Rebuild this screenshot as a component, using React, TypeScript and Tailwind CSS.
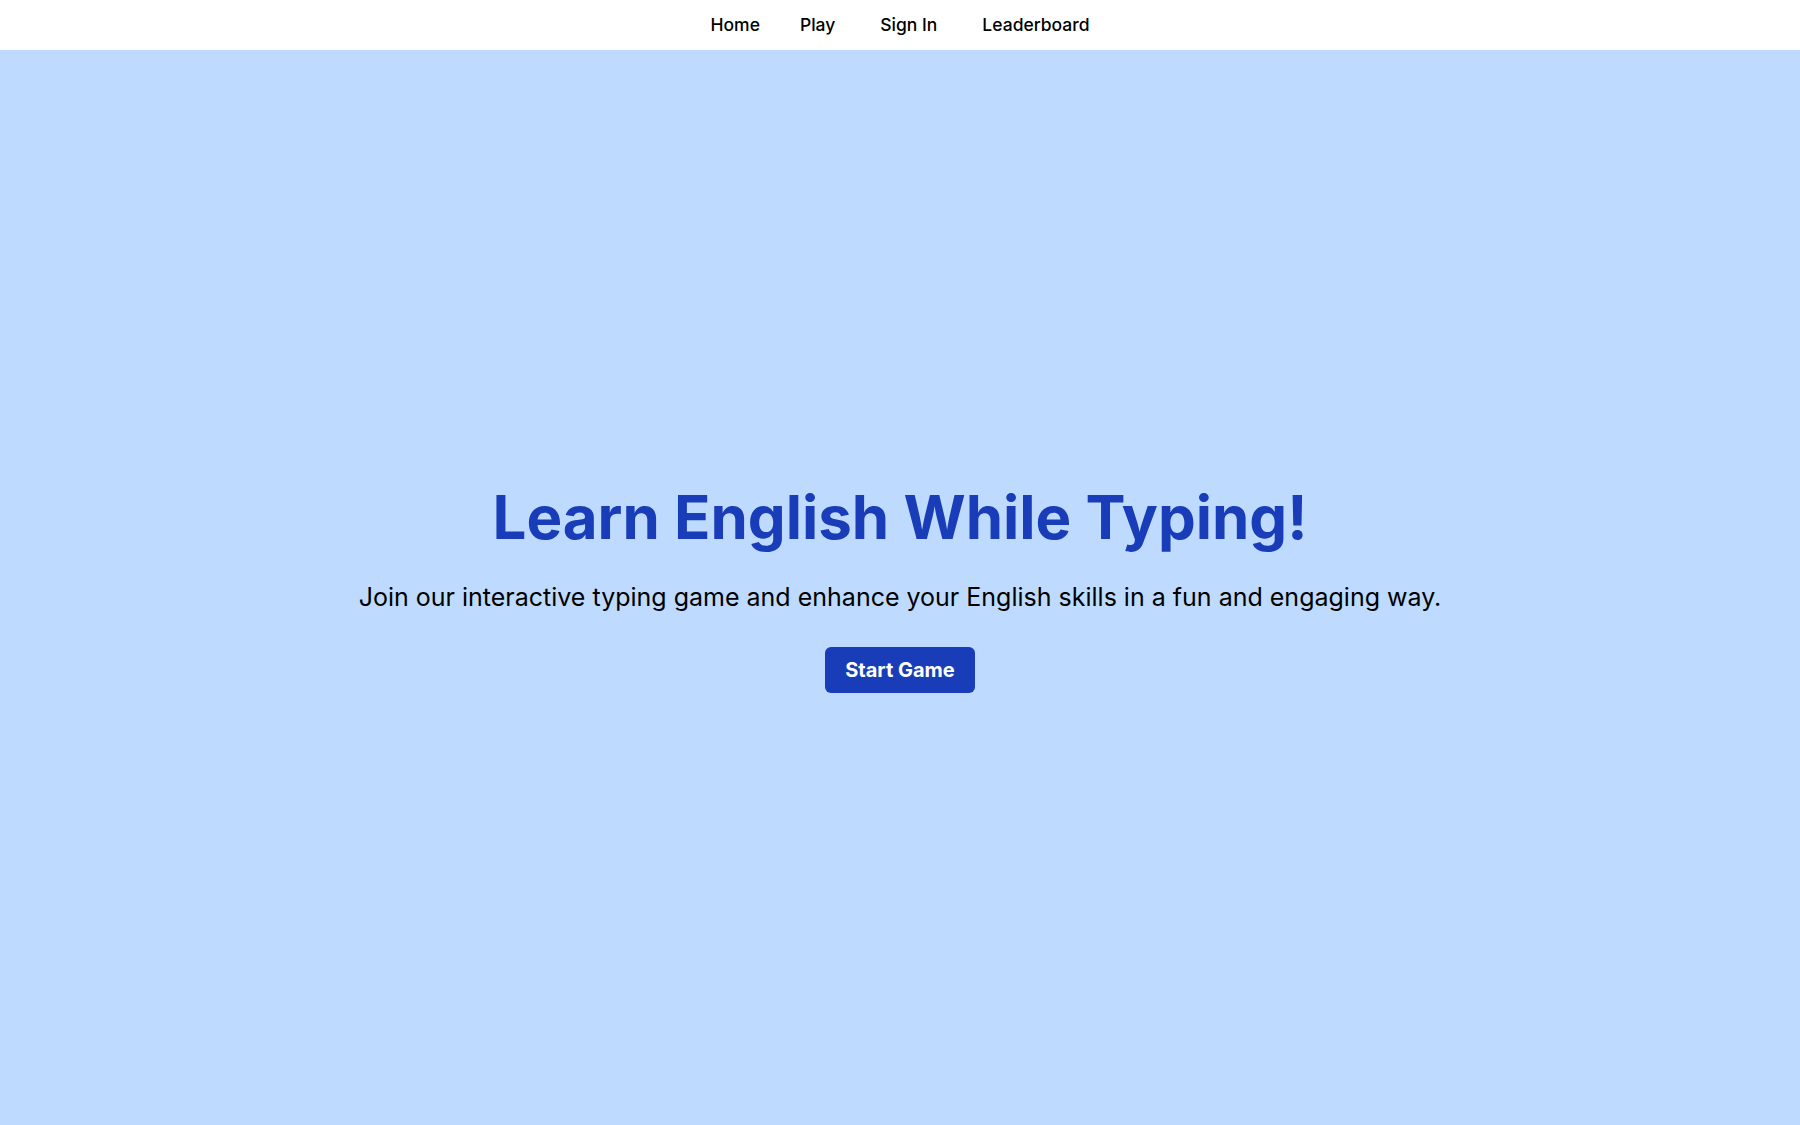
const links: string[] = ['Home', 'Play', 'Sign In', 'Leaderboard'];

const Navbar = () => {
  return (
    <nav className="h-[50px] bg-white flex items-center justify-center">
      <ul className="flex items-center">
        {links.map((link, index) => (
          <li key={link} className={index === 0 ? '' : index === 1 ? 'ml-10' : 'ml-[45px]'}>
            <a href="#" className="text-[17.5px] font-medium text-black">
              {link}
            </a>
          </li>
        ))}
      </ul>
    </nav>
  );
};

const Hero = () => {
  return (
    <main className="flex-1 bg-blue-200 flex flex-col items-center justify-center text-center pt-1">
      <h1 className="text-6xl font-bold text-blue-800 mb-[34px]">
        Learn English While Typing!
      </h1>
      <p className="text-[25px] leading-8 text-black mb-[34px]">
        Join our interactive typing game and enhance your English skills in a fun and engaging way.
      </p>
      <button className="bg-blue-800 text-white text-xl font-bold px-5 py-[9px] rounded-md">
        Start Game
      </button>
    </main>
  );
};

export default function App() {
  return (
    <div className="min-h-screen flex flex-col font-['Inter',sans-serif]">
      <Navbar />
      <Hero />
    </div>
  );
}
